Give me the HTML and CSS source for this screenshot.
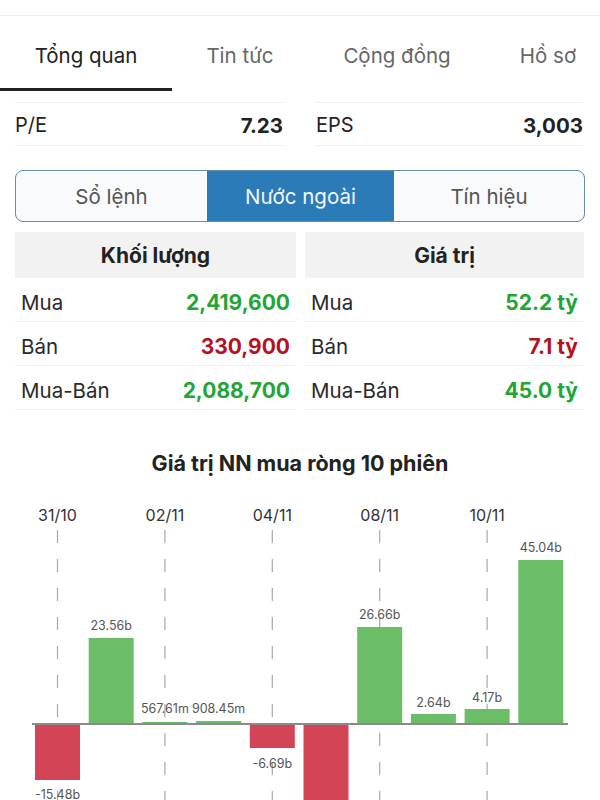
FILE: index.html
```html
<!DOCTYPE html>
<html lang="vi">
<head>
<meta charset="utf-8">
<link rel="stylesheet" href="styles.css">
</head>
<body>
<div class="page">
  <div class="topbar"></div>
  <nav class="tabs">
    <div class="tab active">Tổng quan</div>
    <div class="tab">Tin tức</div>
    <div class="tab">Cộng đồng</div>
    <div class="tab">Hồ sơ</div>
  </nav>
  <div class="stats">
    <div class="stat"><span>P/E</span><b>7.23</b></div>
    <div class="stat"><span>EPS</span><b>3,003</b></div>
  </div>
  <div class="segment">
    <div class="seg">Sổ lệnh</div>
    <div class="seg on">Nước ngoài</div>
    <div class="seg">Tín hiệu</div>
  </div>
  <div class="tables">
    <div class="table">
      <div class="thead">Khối lượng</div>
      <div class="row"><span>Mua</span><b class="up">2,419,600</b></div>
      <div class="row"><span>Bán</span><b class="down">330,900</b></div>
      <div class="row"><span>Mua-Bán</span><b class="up">2,088,700</b></div>
    </div>
    <div class="table">
      <div class="thead">Giá trị</div>
      <div class="row"><span>Mua</span><b class="up">52.2 tỷ</b></div>
      <div class="row"><span>Bán</span><b class="down">7.1 tỷ</b></div>
      <div class="row"><span>Mua-Bán</span><b class="up">45.0 tỷ</b></div>
    </div>
  </div>
  <section class="chart">
    <h3 class="chart-title">Giá trị NN mua ròng 10 phiên</h3>
    <svg class="chart-svg" width="600" height="316" viewBox="0 0 600 316">
      <g class="dates">
        <text x="57.5" y="31">31/10</text>
        <text x="164.9" y="31">02/11</text>
        <text x="272.3" y="31">04/11</text>
        <text x="379.7" y="31">08/11</text>
        <text x="487.1" y="31">10/11</text>
      </g>
      <g class="grid">
        <line x1="57.5" y1="46" x2="57.5" y2="320"/>
        <line x1="164.9" y1="46" x2="164.9" y2="320"/>
        <line x1="272.3" y1="46" x2="272.3" y2="320"/>
        <line x1="379.7" y1="46" x2="379.7" y2="320"/>
        <line x1="487.1" y1="46" x2="487.1" y2="320"/>
      </g>
      <g class="bars">
        <rect class="neg" x="35" y="240" width="45" height="56"/>
        <rect class="pos" x="88.7" y="154" width="45" height="86"/>
        <rect class="pos" x="142.4" y="238" width="45" height="2"/>
        <rect class="pos" x="196.1" y="237" width="45" height="3"/>
        <rect class="neg" x="249.8" y="240" width="45" height="24"/>
        <rect class="neg" x="303.5" y="240" width="45" height="100"/>
        <rect class="pos" x="357.2" y="143" width="45" height="97"/>
        <rect class="pos" x="410.9" y="230" width="45" height="10"/>
        <rect class="pos" x="464.6" y="225" width="45" height="15"/>
        <rect class="pos" x="518.3" y="76" width="45" height="164"/>
      </g>
      <line class="axis" x1="32" y1="240" x2="568" y2="240"/>
      <g class="vals">
        <text x="57.5" y="310">-15.48b</text>
        <text x="111.2" y="141">23.56b</text>
        <text x="164.9" y="224">567.61m</text>
        <text x="218.6" y="224">908.45m</text>
        <text x="272.3" y="279">-6.69b</text>
        <text x="379.7" y="130">26.66b</text>
        <text x="433.4" y="218">2.64b</text>
        <text x="487.1" y="213">4.17b</text>
        <text x="540.8" y="63">45.04b</text>
      </g>
    </svg>
  </section>
</div>
</body>
</html>
```
FILE: styles.css
```css
* { box-sizing: border-box; }
html, body { margin: 0; padding: 0; background: #fff; }
body {
  font-family: Inter, "Noto Sans", "Liberation Sans", sans-serif;
  color: #222;
  width: 600px;
  height: 800px;
  overflow: hidden;
}
.page { width: 600px; overflow: hidden; }
.topbar {
  height: 16px;
  border-bottom: 1px solid #ececec;
}
.tabs {
  display: flex;
  height: 75px;
  overflow: hidden;
}
.tab {
  flex: 0 0 auto;
  padding: 6px 0 0;
  display: flex;
  align-items: center;
  justify-content: center;
  font-size: 20.5px;
  color: #666;
  border-bottom: 3px solid transparent;
  white-space: nowrap;
}
.tab:nth-child(1) { width: 172px; }
.tab:nth-child(2) { width: 136px; }
.tab:nth-child(3) { width: 178px; }
.tab:nth-child(4) { width: 124px; }
.tab.active {
  color: #222;
  border-bottom-color: #222;
}
.stats {
  display: grid;
  grid-template-columns: 268px 267px;
  column-gap: 33px;
  padding: 0 15px;
  margin-top: 11px;
}
.stat {
  display: flex;
  justify-content: space-between;
  align-items: center;
  height: 44px;
  padding-top: 2px;
  border-top: 1px solid #efefef;
  border-bottom: 1px solid #efefef;
  font-size: 20px;
  color: #222;
}
.stat b { font-weight: 700; font-size: 20.5px; }
.segment {
  margin: 24px 15px 0 15px;
  height: 52px;
  border: 1.5px solid #6a8dab;
  border-radius: 8px;
  overflow: hidden;
  display: grid;
  grid-template-columns: 191px 187px 1fr;
  background: #f9fafb;
}
.seg {
  display: flex;
  align-items: center;
  justify-content: center;
  font-size: 20.5px;
  color: #555;
}
.seg.on {
  background: #2b7bb9;
  color: #f4f8fb;
}
.tables {
  display: grid;
  grid-template-columns: 281px 279px;
  column-gap: 9px;
  padding: 0 15px;
  margin-top: 10px;
}
.thead {
  height: 46px;
  background: #f2f2f2;
  display: flex;
  align-items: center;
  justify-content: center;
  font-weight: 700;
  font-size: 21px;
  color: #222;
}
.row {
  height: 44px;
  display: flex;
  align-items: center;
  justify-content: space-between;
  padding: 5px 6px 0 6px;
  border-bottom: 1px solid #efefef;
  font-size: 20.5px;
  color: #2a2a2a;
}
.row b { font-weight: 700; font-size: 21px; }
.up { color: #22a535; }
.down { color: #b2131f; }
.chart { margin-top: 30px; }
.chart-title {
  margin: 0;
  height: 44px;
  line-height: 46px;
  text-align: center;
  font-size: 21.5px;
  font-weight: 700;
  color: #222;
}
.chart-svg { display: block; overflow: hidden; }
.dates text {
  font-size: 16px;
  fill: #333;
  text-anchor: middle;
  dominant-baseline: central;
  font-family: Inter, "Noto Sans", sans-serif;
}
.grid line {
  stroke: #a8a8a8;
  stroke-width: 1.2;
  stroke-dasharray: 13 16;
}
.pos { fill: #6cbd68; }
.neg { fill: #d24456; }
.axis { stroke: #8a8a8a; stroke-width: 2; }
.vals text {
  font-size: 12.5px;
  fill: #555;
  text-anchor: middle;
  dominant-baseline: central;
  font-family: Inter, "Noto Sans", sans-serif;
}
```
